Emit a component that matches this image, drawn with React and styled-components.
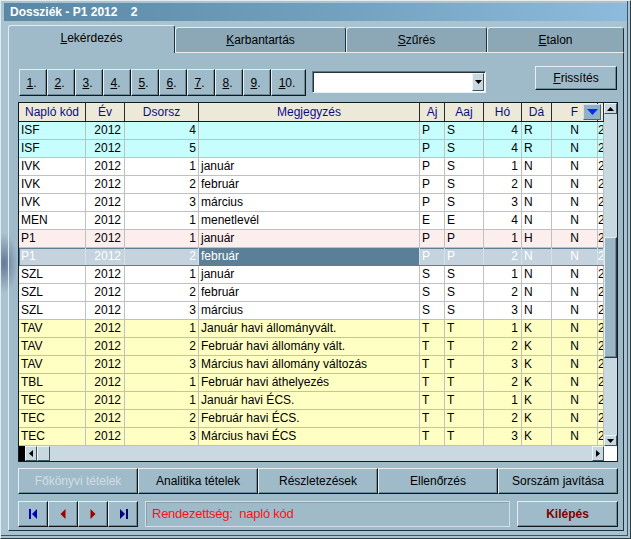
import React from 'react';
import styled, { createGlobalStyle, css } from 'styled-components';

const FACE = '#9fbbca';
const cols = '67px 39px 74px 221px 25px 39px 38px 30px 46px 6px';
const blob = (x, y) =>
  `radial-gradient(ellipse 14px 30px at ${x}px ${y}px, rgba(78, 96, 130, 0.75), rgba(78, 96, 130, 0) 100%)`;

const GlobalStyle = createGlobalStyle`
  html, body {
    margin: 0;
    padding: 0;
    background: #a9c3d0;
  }
  body {
    font-family: 'Liberation Sans', Arial, sans-serif;
    font-size: 12px;
    color: #000;
  }
  * {
    box-sizing: border-box;
  }
`;

const raised = css`
  border: 1px solid;
  border-color: #e4eef3 #10181c #10181c #e4eef3;
  box-shadow: inset -1px -1px 0 #6f8a99;
  background: ${FACE};
  font-family: 'Liberation Sans', Arial, sans-serif;
  font-size: 12px;
  padding: 0;
  cursor: default;
`;

const Window = styled.div`
  width: 631px;
  height: 539px;
  display: flex;
  flex-direction: column;
  padding: 2px 3px 4px 3px;
  background: ${blob(3, 262)}, #a9c3d0;
  border: 1px solid;
  border-color: #e2ecf1 #2c3c45 #2c3c45 #e2ecf1;
  box-shadow: inset -2px -2px 0 #a9c3d0, inset -3px -3px 0 #3e5461;
`;

const TitleBar = styled.div`
  height: 18px;
  line-height: 18px;
  padding-left: 6px;
  background: linear-gradient(90deg, #5a88a3 0%, #74a1bf 55%, #8dbbdd 100%);
  color: #fff;
  font-weight: bold;
  font-size: 12px;
  white-space: pre;
`;

const Body = styled.div`
  flex: 1;
  display: flex;
  flex-direction: column;
  padding: 4px 3px 3px 4px;
`;

const TabRow = styled.div`
  display: flex;
  align-items: flex-end;
  height: 27px;
`;

const Tab = styled.div`
  width: ${(p) => p.$w}px;
  height: ${(p) => (p.$active ? 28 : 25)}px;
  margin-bottom: ${(p) => (p.$active ? -1 : 0)}px;
  position: relative;
  z-index: ${(p) => (p.$active ? 1 : 0)};
  display: flex;
  align-items: center;
  justify-content: center;
  padding-bottom: ${(p) => (p.$active ? 3 : 0)}px;
  background: ${(p) => (p.$active ? FACE : '#8ca8b7')};
  border: 1px solid;
  border-bottom: none;
  border-color: #e2ecf1 #22323a #22323a #e2ecf1;
  border-radius: 3px 3px 0 0;
`;

const Acc = styled.span`
  text-decoration: underline;
  text-underline-offset: 1px;
`;

const Panel = styled.div`
  flex: 1;
  display: flex;
  flex-direction: column;
  padding: 13px 5px 2px 9px;
  background: ${blob(-5, 210)}, ${FACE};
  border: 1px solid;
  border-color: #e2ecf1 #22323a #22323a #e2ecf1;
`;

const Toolbar = styled.div`
  display: flex;
  align-items: flex-start;
  height: 31px;
`;

const NumGroup = styled.div`
  display: flex;
  margin: 3px 0 0 1px;
`;

const NumButton = styled.button`
  ${raised};
  width: ${(p) => p.$w}px;
  height: 27px;
  padding-right: 3px;
`;

const Combo = styled.div`
  width: 174px;
  height: 22px;
  margin: 5px 0 0 6px;
  display: flex;
  justify-content: flex-end;
  padding: 1px;
  background: #fff;
  border: 1px solid;
  border-color: #5e7785 #e6eff4 #e6eff4 #5e7785;
  box-shadow: inset 1px 1px 0 #24343c;
`;

const SmallArrow = styled.div`
  width: ${(p) => p.$w || 12}px;
  height: ${(p) => p.$h || 12}px;
  flex: none;
  display: flex;
  align-items: center;
  justify-content: center;
  background: #c8d8e0;
  border: 1px solid;
  border-color: #eef4f7 #40525c #40525c #eef4f7;
`;

const Refresh = styled.button`
  ${raised};
  margin-left: auto;
  margin-right: 1px;
  width: 82px;
  height: 24px;
`;

const GridFrame = styled.div`
  margin-top: 5px;
  width: 600px;
  height: 360px;
  display: flex;
  flex-direction: column;
  border: 1px solid #141c20;
  background: #c9d9e1;
`;

const GridTop = styled.div`
  flex: 1;
  display: flex;
  min-height: 0;
`;

const Viewport = styled.div`
  width: 585px;
  overflow: hidden;
  background: #fff;
`;

const HeadRow = styled.div`
  display: grid;
  grid-template-columns: ${cols};
  height: 19px;
  line-height: 18px;
  background: #ece9d8;
  border-bottom: 1px solid #1a1a1a;
`;

const HeadCell = styled.div`
  position: relative;
  text-align: center;
  color: #0c0c8a;
  border-right: 1px solid #2a2a2a;
  white-space: nowrap;
`;

const DropBtn = styled.div`
  position: absolute;
  left: 31px;
  top: 1px;
  width: 18px;
  height: 16px;
  z-index: 2;
  display: flex;
  align-items: center;
  justify-content: center;
  background: #8fb2ca;
  border: 1px solid;
  border-color: #d2e2ec #4b6676 #4b6676 #d2e2ec;
`;

const tones = {
  white: '#ffffff',
  cyan: '#c6fdfd',
  pink: '#fdeeee',
  yellow: '#ffffc4',
  sel: '#c4d3dd',
};

const Row = styled.div`
  display: grid;
  grid-template-columns: ${cols};
  height: 18px;
  line-height: 17px;
  background: ${(p) => tones[p.$tone]};
  color: ${(p) => (p.$tone === 'sel' ? '#fff' : '#000')};
  border-bottom: 1px solid ${(p) => (p.$tone === 'sel' ? '#5a7f97' : '#c0c0c0')};
  box-shadow: ${(p) => (p.$tone === 'sel' ? 'inset 0 1px 0 #5a7f97, inset 1px 0 0 #5a7f97' : 'none')};
`;

const Cell = styled.div`
  padding: 0 ${(p) => p.$pad}px;
  text-align: ${(p) => p.$align};
  border-right: 1px solid ${(p) => (p.$sel ? '#d6e0e6' : '#c0c0c0')};
  background: ${(p) => p.$bg || 'transparent'};
  white-space: nowrap;
  overflow: hidden;
`;

const VScroll = styled.div`
  width: 13px;
  display: flex;
  flex-direction: column;
  background: #c9d9e1;
`;

const Track = styled.div`
  flex: 1;
  display: flex;
  flex-direction: column;
`;

const Thumb = styled.div`
  margin-top: 123px;
  height: 121px;
  background: #9cb8c8;
  border: 1px solid;
  border-color: #e2ecf1 #2c3c45 #2c3c45 #e2ecf1;
  box-shadow: inset -1px -1px 0 #6f8a99;
`;

const HScroll = styled.div`
  height: 15px;
  display: flex;
  align-items: stretch;
  background: #c9d9e1;
`;

const BlackStub = styled.div`
  width: 6px;
  background: #000;
`;

const HThumb = styled.div`
  width: 13px;
  background: #c8d8e0;
  border: 1px solid;
  border-color: #eef4f7 #40525c #40525c #eef4f7;
`;

const HTrack = styled.div`
  flex: 1;
`;

const Corner = styled.div`
  width: 13px;
  background: #fff;
`;

const ButtonRow = styled.div`
  margin-top: 6px;
  display: grid;
  grid-template-columns: repeat(5, 120px);
  height: 26px;
`;

const BigButton = styled.button`
  ${raised};
  height: 26px;
  color: ${(p) => (p.$disabled ? '#d2dde3' : '#000')};
`;

const NavRow = styled.div`
  margin-top: 7px;
  display: flex;
  height: 26px;
`;

const NavGroup = styled.div`
  display: flex;
`;

const NavButton = styled.button`
  ${raised};
  width: 30px;
  height: 26px;
  display: flex;
  align-items: center;
  justify-content: center;
`;

const Status = styled.div`
  flex: 1;
  margin: 0 7px;
  padding-left: 6px;
  line-height: 24px;
  color: #ff1010;
  font-size: 13px;
  letter-spacing: -0.25px;
  white-space: pre;
  border: 1px solid #d3e0e7;
  box-shadow: inset 1px 1px 0 #86a0ae;
`;

const Exit = styled.button`
  ${raised};
  width: 101px;
  height: 26px;
  color: #800000;
  font-weight: bold;
`;

const TriUp = () => (
  <svg width="7" height="4" viewBox="0 0 7 4">
    <path d="M3.5 0 L7 4 L0 4 Z" fill="#000" />
  </svg>
);
const TriDown = ({ color = '#000', w = 7, h = 4 }) => (
  <svg width={w} height={h} viewBox={`0 0 ${w} ${h}`}>
    <path d={`M0 0 L${w} 0 L${w / 2} ${h} Z`} fill={color} />
  </svg>
);
const TriLeft = () => (
  <svg width="4" height="7" viewBox="0 0 4 7">
    <path d="M4 0 L4 7 L0 3.5 Z" fill="#000" />
  </svg>
);
const TriRight = () => (
  <svg width="4" height="7" viewBox="0 0 4 7">
    <path d="M0 0 L4 3.5 L0 7 Z" fill="#000" />
  </svg>
);

const NavIcon = ({ kind }) => {
  if (kind === 'first')
    return (
      <svg width="9" height="10" viewBox="0 0 9 10">
        <rect x="0" y="0" width="2" height="10" fill="#0000b4" />
        <path d="M8 0 L8 10 L3 5 Z" fill="#0000b4" />
      </svg>
    );
  if (kind === 'prev')
    return (
      <svg width="6" height="10" viewBox="0 0 6 10">
        <path d="M5.5 0 L5.5 10 L0.5 5 Z" fill="#a00000" />
      </svg>
    );
  if (kind === 'next')
    return (
      <svg width="6" height="10" viewBox="0 0 6 10">
        <path d="M0.5 0 L5.5 5 L0.5 10 Z" fill="#a00000" />
      </svg>
    );
  return (
    <svg width="9" height="10" viewBox="0 0 9 10">
      <path d="M1 0 L6 5 L1 10 Z" fill="#000080" />
      <rect x="7" y="0" width="2" height="10" fill="#000080" />
    </svg>
  );
};

const heads = ['Napló kód', 'Év', 'Dsorsz', 'Megjegyzés', 'Aj', 'Aaj', 'Hó', 'Dá', 'F', ''];
const align = ['left', 'right', 'right', 'left', 'left', 'left', 'right', 'left', 'center', 'left'];
const pad = [2, 3, 2, 2, 2, 2, 3, 2, 2, 2];

const rows = [
  ['ISF', '2012', '4', '', 'P', 'S', '4', 'R', 'N', 'cyan'],
  ['ISF', '2012', '5', '', 'P', 'S', '4', 'R', 'N', 'cyan'],
  ['IVK', '2012', '1', 'január', 'P', 'S', '1', 'N', 'N', 'white'],
  ['IVK', '2012', '2', 'február', 'P', 'S', '2', 'N', 'N', 'white'],
  ['IVK', '2012', '3', 'március', 'P', 'S', '3', 'N', 'N', 'white'],
  ['MEN', '2012', '1', 'menetlevél', 'E', 'E', '4', 'N', 'N', 'white'],
  ['P1', '2012', '1', 'január', 'P', 'P', '1', 'H', 'N', 'pink'],
  ['P1', '2012', '2', 'február', 'P', 'P', '2', 'N', 'N', 'sel'],
  ['SZL', '2012', '1', 'január', 'S', 'S', '1', 'N', 'N', 'white'],
  ['SZL', '2012', '2', 'február', 'S', 'S', '2', 'N', 'N', 'white'],
  ['SZL', '2012', '3', 'március', 'S', 'S', '3', 'N', 'N', 'white'],
  ['TAV', '2012', '1', 'Január havi állományvált.', 'T', 'T', '1', 'K', 'N', 'yellow'],
  ['TAV', '2012', '2', 'Február havi állomány vált.', 'T', 'T', '2', 'K', 'N', 'yellow'],
  ['TAV', '2012', '3', 'Március havi állomány változás', 'T', 'T', '3', 'K', 'N', 'yellow'],
  ['TBL', '2012', '1', 'Február havi áthelyezés', 'T', 'T', '2', 'K', 'N', 'yellow'],
  ['TEC', '2012', '1', 'Január havi ÉCS.', 'T', 'T', '1', 'K', 'N', 'yellow'],
  ['TEC', '2012', '2', 'Február havi ÉCS.', 'T', 'T', '2', 'K', 'N', 'yellow'],
  ['TEC', '2012', '3', 'Március havi ÉCS', 'T', 'T', '3', 'K', 'N', 'yellow'],
];

const tabs = [
  { w: 167, acc: 'L', rest: 'ekérdezés', active: true },
  { w: 171, acc: 'K', rest: 'arbantartás' },
  { w: 141, acc: 'S', rest: 'zűrés' },
  { w: 137, acc: 'E', rest: 'talon' },
];

const nums = ['1', '2', '3', '4', '5', '6', '7', '8', '9', '10'];

export default function App() {
  return (
    <>
      <GlobalStyle />
      <Window>
        <TitleBar>{'Dossziék - P1 2012    2'}</TitleBar>
        <Body>
          <TabRow>
            {tabs.map((t) => (
              <Tab key={t.acc} $w={t.w} $active={t.active}>
                <Acc>{t.acc}</Acc>
                {t.rest}
              </Tab>
            ))}
          </TabRow>
          <Panel>
            <Toolbar>
              <NumGroup>
                {nums.map((n) => (
                  <NumButton key={n} $w={n === '10' ? 35 : 28}>
                    {n === '10' ? (
                      <>
                        <Acc>1</Acc>0.
                      </>
                    ) : (
                      <>
                        <Acc>{n}</Acc>.
                      </>
                    )}
                  </NumButton>
                ))}
              </NumGroup>
              <Combo>
                <SmallArrow $w={12} $h={18}>
                  <TriDown />
                </SmallArrow>
              </Combo>
              <Refresh>
                <Acc>F</Acc>rissítés
              </Refresh>
            </Toolbar>

            <GridFrame>
              <GridTop>
                <Viewport>
                  <HeadRow>
                    {heads.map((h, i) => (
                      <HeadCell key={i}>
                        {h}
                        {h === 'F' && (
                          <DropBtn>
                            <TriDown color="#0a2cf0" w={11} h={6} />
                          </DropBtn>
                        )}
                      </HeadCell>
                    ))}
                  </HeadRow>
                  {rows.map((r, ri) => {
                    const tone = r[9];
                    const cells = [...r.slice(0, 9), '2'];
                    return (
                      <Row key={ri} $tone={tone}>
                        {cells.map((c, ci) => (
                          <Cell
                            key={ci}
                            $align={align[ci]}
                            $pad={ci === 9 ? 0 : pad[ci]}
                            $sel={tone === 'sel'}
                            $bg={tone === 'sel' && ci === 3 ? '#5a7f97' : null}
                          >
                            {c}
                          </Cell>
                        ))}
                      </Row>
                    );
                  })}
                </Viewport>
                <VScroll>
                  <SmallArrow $w={13} $h={11}>
                    <TriUp />
                  </SmallArrow>
                  <Track>
                    <Thumb />
                  </Track>
                  <SmallArrow $w={13} $h={11}>
                    <TriDown />
                  </SmallArrow>
                </VScroll>
              </GridTop>
              <HScroll>
                <BlackStub />
                <SmallArrow $w={12} $h={15}>
                  <TriLeft />
                </SmallArrow>
                <HThumb />
                <HTrack />
                <SmallArrow $w={12} $h={15}>
                  <TriRight />
                </SmallArrow>
                <Corner />
              </HScroll>
            </GridFrame>

            <ButtonRow>
              <BigButton $disabled>Főkönyvi tételek</BigButton>
              <BigButton>Analitika tételek</BigButton>
              <BigButton>Részletezések</BigButton>
              <BigButton>Ellenőrzés</BigButton>
              <BigButton>Sorszám javítása</BigButton>
            </ButtonRow>

            <NavRow>
              <NavGroup>
                <NavButton>
                  <NavIcon kind="first" />
                </NavButton>
                <NavButton>
                  <NavIcon kind="prev" />
                </NavButton>
                <NavButton>
                  <NavIcon kind="next" />
                </NavButton>
                <NavButton>
                  <NavIcon kind="last" />
                </NavButton>
              </NavGroup>
              <Status>{'Rendezettség:  napló kód'}</Status>
              <Exit>Kilépés</Exit>
            </NavRow>
          </Panel>
        </Body>
      </Window>
    </>
  );
}
